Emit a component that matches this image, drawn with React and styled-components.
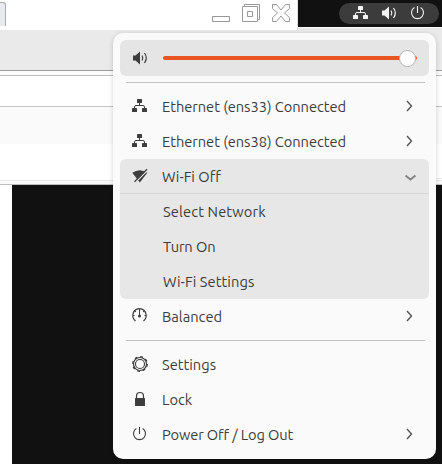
import React from "react";
import styled, { createGlobalStyle } from "styled-components";

const GlobalStyle = createGlobalStyle`
  * { box-sizing: border-box; }
  body { margin: 0; overflow: hidden; background: #111; }
`;

const Desktop = styled.div`
  position: relative;
  width: 442px;
  height: 464px;
  overflow: hidden;
  background: #111;
  color: #3d3d3d;
  font-family: Ubuntu, "Noto Sans", sans-serif;
  font-size: 14.667px;
`;
const TopStrip = styled.div`
  display: flex;
  height: 30px;
  background: #e8e8e8;
`;
const WindowTitle = styled.div`
  display: flex;
  justify-content: space-between;
  width: 298px;
  height: 30px;
  border-right: 1px solid #ddd;
  background: #fff;
`;
const TabEdge = styled.div`
  width: 6px;
  height: 24px;
  margin-top: 2px;
  border: 1px solid #aaa;
  border-width: 1px 1px 0 0;
  border-top-right-radius: 3px;
  background: #e9eaeb;
`;
const WindowButtons = styled.svg`
  display: block;
  width: 84px;
  height: 28px;
  margin-right: 4px;
`;
const SystemBar = styled.div`
  flex: 1;
  height: 28px;
  padding: 3px 3px 0 41px;
  border-bottom: 1px solid #fafafa;
  background: #111;
`;
const Glyph = styled.svg`
  display: block;
  flex: none;
  width: 16px;
  height: 16px;
  overflow: visible;
`;
const StatusPill = styled.div`
  height: 21px;
  border-radius: 11px;
  background: #3c3c3c;
  color: #f4f4f4;
  display: flex;
  align-items: center;
  padding: 0 0 1px 14px;
  gap: 12px;

  ${Glyph}:first-child {
    margin-right: 1px;
  }
`;
const Band = styled.div`
  height: ${(p) => p.$h}px;
  background: ${(p) => p.$bg};
  border-bottom: ${(p) => (p.$line ? `1px solid ${p.$line}` : "0")};
`;
const ContentBand = styled(Band)`
  display: flex;
  justify-content: flex-end;
`;
const FieldEdge = styled.div`
  width: 6px;
  height: 32px;
  margin-top: 3px;
  border: 1px solid #ebebeb;
  border-width: 0 0 1px 0;
  background: #fff;
`;
const WindowFoot = styled.div`
  width: 12px;
  height: 279px;
  background: #fff;
`;
const Menu = styled.div`
  position: absolute;
  left: 113px;
  top: 33px;
  width: 323px;
  height: 426px;
  padding: 7px;
  border-radius: 10px;
  background: #fafafa;
  box-shadow: 0 1px 5px rgba(0, 0, 0, 0.18);
`;
const VolumePanel = styled.div`
  display: flex;
  align-items: center;
  gap: 14px;
  height: 36px;
  padding-left: 13px;
  border-radius: 6px;
  background: #e5e5e5;
`;
const Track = styled.div`
  display: flex;
  align-items: center;
  justify-content: flex-end;
  width: 254px;
  height: 4px;
  border-radius: 2px;
  background: #e95420;
`;
const Knob = styled.div`
  width: 17px;
  height: 17px;
  margin-right: 1px;
  border: 1px solid #b3b3b3;
  border-radius: 50%;
  background: #fff;
`;
const Divider = styled.div`
  height: 1px;
  margin: 6px 4px 6px 6px;
  background: #c2c2c2;
`;
const Row = styled.div`
  display: flex;
  align-items: center;
  height: 35px;
  padding: 0 11px 0 12px;

  ${Glyph} {
    margin-bottom: 1px;
  }
`;
const Submenu = styled.div`
  height: 140px;
  border-radius: 6px;
  background: #e7e7e7;
`;
const SubmenuHeader = styled(Row)`
  padding-top: 1px;
  border-bottom: 1px solid #d6d6d6;
`;
const SubItem = styled(Row)`
  padding-left: 43px;
`;
const Label = styled.span`
  flex: 1;
  margin-left: ${(p) => (p.$sub ? 0 : 14)}px;
  line-height: 20px;
  white-space: nowrap;
  letter-spacing: ${(p) => p.$track || 0}px;
`;

const Network = () => (
  <Glyph viewBox="0 0 16 16" fill="currentColor">
    <rect x="5" y="1" width="5" height="4" rx=".6" />
    <rect x="0" y="10" width="5" height="4" rx=".6" />
    <rect x="10" y="10" width="5" height="4" rx=".6" />
    <path d="M7.500 5v2.500M2.500 10V9q0-1.500 1.500-1.500h7q1.500 0 1.500 1.500v1" fill="none" stroke="currentColor" />
  </Glyph>
);
const Speaker = () => (
  <Glyph viewBox="0 0 16 16">
    <path d="M0 5.500h2.500L7 1.500v13L2.500 10.500H0z" fill="currentColor" />
    <path d="M9 5.500q1.600 2.500 0 5M11.500 3q3.600 5 0 10" fill="none" stroke="currentColor" strokeWidth="1.200" />
  </Glyph>
);
const Power = () => (
  <Glyph viewBox="0 0 16 16" fill="none" stroke="currentColor" strokeWidth="1.100">
    <path d="M7.500 1v7M4.400 2.500a6 6 0 1 0 6.200 0" />
  </Glyph>
);
const WifiOff = () => (
  <Glyph viewBox="0 0 16 16">
    <path d="M.3 4.800Q7.700-.5 15.300 4.800L7.800 14.500z" fill="currentColor" />
    <path d="M3.500 14.200L16 1.700" stroke="#e7e7e7" strokeWidth="1.500" />
    <path d="M2.500 13.700L15 1.200" stroke="currentColor" strokeWidth="1.300" />
  </Glyph>
);
const Gauge = () => (
  <Glyph viewBox="0 0 16 16" fill="none" stroke="currentColor" strokeWidth="1.200">
    <path d="M3.500 13A7 7 0 0 1 5 1.100Q7.500.2 10 1.100A7 7 0 0 1 11.500 13" />
    <path d="M7.500 1v7" strokeWidth="1" />
    <path d="M1 7.500h1.500M12.500 7.500H14M3 3l.8.8M12 3l-.8.8" />
    <circle cx="7.500" cy="8" r="1.500" fill="currentColor" stroke="none" />
  </Glyph>
);
const Gear = () => (
  <Glyph viewBox="0 0 16 16" fill="none" stroke="currentColor">
    <circle cx="8" cy="8" r="6.500" strokeWidth="1.200" />
    <circle cx="8" cy="8" r="7.300" strokeWidth="1.200" strokeDasharray="2.867 2.867" />
    <circle cx="8" cy="8" r="4.500" strokeWidth="1.100" />
  </Glyph>
);
const Padlock = () => (
  <Glyph viewBox="0 0 16 16">
    <rect x="3" y="7" width="10" height="8" rx=".5" fill="currentColor" />
    <path d="M4.500 7V5a3.500 3.500 0 0 1 7 0v2" fill="none" stroke="currentColor" strokeWidth="1.200" />
  </Glyph>
);
const Chevron = () => (
  <Glyph viewBox="0 0 16 16" fill="none" stroke="#555" strokeWidth="1.400">
    <path d="M5 3l4.500 5L5 13" />
  </Glyph>
);
const ChevronDown = () => (
  <Glyph viewBox="0 0 16 16" fill="none" stroke="#858585" strokeWidth="2">
    <path d="M3.500 7.500l5 4 5-4" />
  </Glyph>
);

export default function App() {
  return (
    <>
      <GlobalStyle />
      <Desktop>
        <TopStrip>
          <WindowTitle>
            <TabEdge />
            <WindowButtons viewBox="0 0 84 28" fill="none" stroke="#999">
              <path d="M3.500 16.500h17v5h-17zM33.500 6.500h15v15h-15zM38.500 11.500h5v5h-5zM35.500 6.500v-2h15v15h-2" />
              <path d="M63.500 4.500h4l4.500 5.500 4.500-5.500h4v4l-5 4.500 5 4.500v4h-4l-4.500-5.500-4.500 5.500h-4v-4l5-4.500-5-4.500z" />
            </WindowButtons>
          </WindowTitle>
          <SystemBar>
            <StatusPill><Network /><Speaker /><Power /></StatusPill>
          </SystemBar>
        </TopStrip>
        <Band $h={41} $bg="#eaeaea" $line="#9c9c9c" />
        <Band $h={5} $bg="#fbfbfb" $line="#bdbdbd" />
        <Band $h={31} $bg="#fff" $line="#c2c2c2" />
        <Band $h={37} $bg="#fafafa" />
        <ContentBand $h={37} $bg="#fff" $line="#e8e8e8"><FieldEdge /></ContentBand>
        <Band $h={4} $bg="#fafafa" $line="#bcbfbd" />
        <WindowFoot />
        <Menu>
          <VolumePanel><Speaker /><Track><Knob /></Track></VolumePanel>
          <Divider />
          <Row><Network /><Label $track={-0.04}>Ethernet (ens33) Connected</Label><Chevron /></Row>
          <Row><Network /><Label $track={-0.04}>Ethernet (ens38) Connected</Label><Chevron /></Row>
          <Submenu>
            <SubmenuHeader><WifiOff /><Label>Wi-Fi Off</Label><ChevronDown /></SubmenuHeader>
            <SubItem><Label $sub $track={0.13}>Select Network</Label></SubItem>
            <SubItem><Label $sub $track={-0.1}>Turn On</Label></SubItem>
            <SubItem><Label $sub $track={0.08}>Wi-Fi Settings</Label></SubItem>
          </Submenu>
          <Row><Gauge /><Label>Balanced</Label><Chevron /></Row>
          <Divider />
          <Row><Gear /><Label>Settings</Label></Row>
          <Row><Padlock /><Label>Lock</Label></Row>
          <Row><Power /><Label $track={-0.12}>Power Off / Log Out</Label><Chevron /></Row>
        </Menu>
      </Desktop>
    </>
  );
}
